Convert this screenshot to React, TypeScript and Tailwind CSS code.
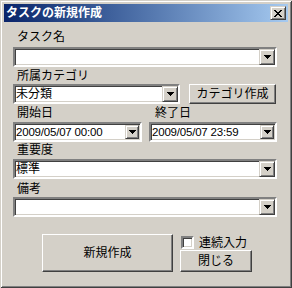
const font = "font-['Liberation_Sans','Noto_Sans_CJK_JP',sans-serif]";

const sunken =
  "border-2 border-t-[#808080] border-l-[#808080] border-r-white border-b-white shadow-[inset_1px_1px_0_#404040,inset_-1px_-1px_0_#d4d0c8]";

const raised =
  "border border-t-white border-l-white border-r-[#404040] border-b-[#404040] shadow-[inset_-1px_-1px_0_#808080]";

const smallRaised =
  "border border-t-[#d4d0c8] border-l-[#d4d0c8] border-r-[#404040] border-b-[#404040] shadow-[inset_1px_1px_0_#fff,inset_-1px_-1px_0_#808080]";

const Arrow = () => (
  <svg width="7" height="4" viewBox="0 0 7 4" shapeRendering="crispEdges">
    <path d="M0 0h7v1H0zM1 1h5v1H1zM2 2h3v1H2zM3 3h1v1H3z" fill="#000" />
  </svg>
);

const Combo = ({ value = "", className = "" }: { value?: string; className?: string }) => (
  <div className={`${sunken} h-[20px] bg-white flex items-center ${className}`}>
    <div className="flex-1 pl-[1px] text-[12px] leading-[16px] text-black whitespace-nowrap">{value}</div>
    <div className={`${smallRaised} w-[16px] h-[16px] bg-[#d4d0c8] flex items-center justify-center`}>
      <Arrow />
    </div>
  </div>
);

const DateBox = ({ value, className = "" }: { value: string; className?: string }) => (
  <div className={`${sunken} h-[20px] bg-white flex items-center ${className}`}>
    <div className="flex-1 pl-[1px] text-[11.5px] tracking-[-0.2px] leading-[16px] text-black whitespace-nowrap">{value}</div>
    <div className={`${smallRaised} w-[14px] h-[14px] mr-[1px] bg-[#d4d0c8] flex items-center justify-center`}>
      <Arrow />
    </div>
  </div>
);

const Label = ({ text, className = "" }: { text: string; className?: string }) => (
  <div className={`h-[16px] leading-[16px] text-[12px] text-black pl-[4px] ${className}`}>{text}</div>
);

export default function App() {
  return (
    <div
      className={`${font} w-[292px] h-[288px] bg-[#d4d0c8] p-[4px] flex flex-col shadow-[inset_1px_1px_0_#d4d0c8,inset_-1px_-1px_0_#404040,inset_2px_2px_0_#fff,inset_-2px_-2px_0_#808080]`}
    >
      {/* title bar */}
      <div className="h-[18px] bg-gradient-to-r from-[#0a246a] to-[#a6caf0] flex items-center justify-between">
        <div className="pl-[2px] text-white font-bold text-[12px] leading-[18px] whitespace-nowrap">タスクの新規作成</div>
        <div className={`${smallRaised} w-[16px] h-[14px] mr-[2px] bg-[#d4d0c8] flex items-center justify-center`}>
          <svg width="8" height="7" viewBox="0 0 8 7" shapeRendering="crispEdges">
            <path
              d="M0 0h2v1H0zM6 0h2v1H6zM1 1h2v1H1zM5 1h2v1H5zM2 2h4v1H2zM3 3h2v1H3zM2 4h4v1H2zM1 5h2v1H1zM5 5h2v1H5zM0 6h2v1H0zM6 6h2v1H6z"
              fill="#000"
            />
          </svg>
        </div>
      </div>

      <div className="flex flex-col pl-[9px] pr-[11px]">
        <Label text="タスク名" className="mt-[7px]" />
        <Combo className="mt-[2px]" />

        <Label text="所属カテゴリ" className="mt-[1px]" />
        <div className="flex items-center">
          <Combo value="未分類" className="w-[167px]" />
          <button className={`${raised} ml-[9px] w-[87px] h-[20px] bg-[#d4d0c8] text-[12px] leading-[16px] text-black`}>
            カテゴリ作成
          </button>
        </div>

        <div className="flex mt-[1px]">
          <Label text="開始日" className="w-[136px]" />
          <Label text="終了日" className="pl-[6px]" />
        </div>
        <div className="flex mt-[1px]">
          <DateBox value="2009/05/07 00:00" className="w-[129px]" />
          <DateBox value="2009/05/07 23:59" className="ml-[7px] w-[128px]" />
        </div>

        <Label text="重要度" />
        <Combo value="標準" className="mt-[1px]" />

        <Label text="備考" className="mt-[2px]" />
        <Combo />

        <div className="flex mt-[17px] ml-[29px]">
          <button className={`${raised} w-[131px] h-[38px] bg-[#d4d0c8] text-[12px] text-black`}>新規作成</button>
          <div className="flex flex-col ml-[7px]">
            <div className="flex items-center h-[13px] mt-[2px] ml-[1px]">
              <div className={`${sunken} w-[13px] h-[13px] bg-white`} />
              <span className="ml-[5px] text-[12px] leading-[16px] text-black whitespace-nowrap">連続入力</span>
            </div>
            <button className={`${raised} mt-[1px] w-[72px] h-[22px] bg-[#d4d0c8] text-[12px] leading-[16px] text-black`}>
              閉じる
            </button>
          </div>
        </div>
      </div>
    </div>
  );
}
